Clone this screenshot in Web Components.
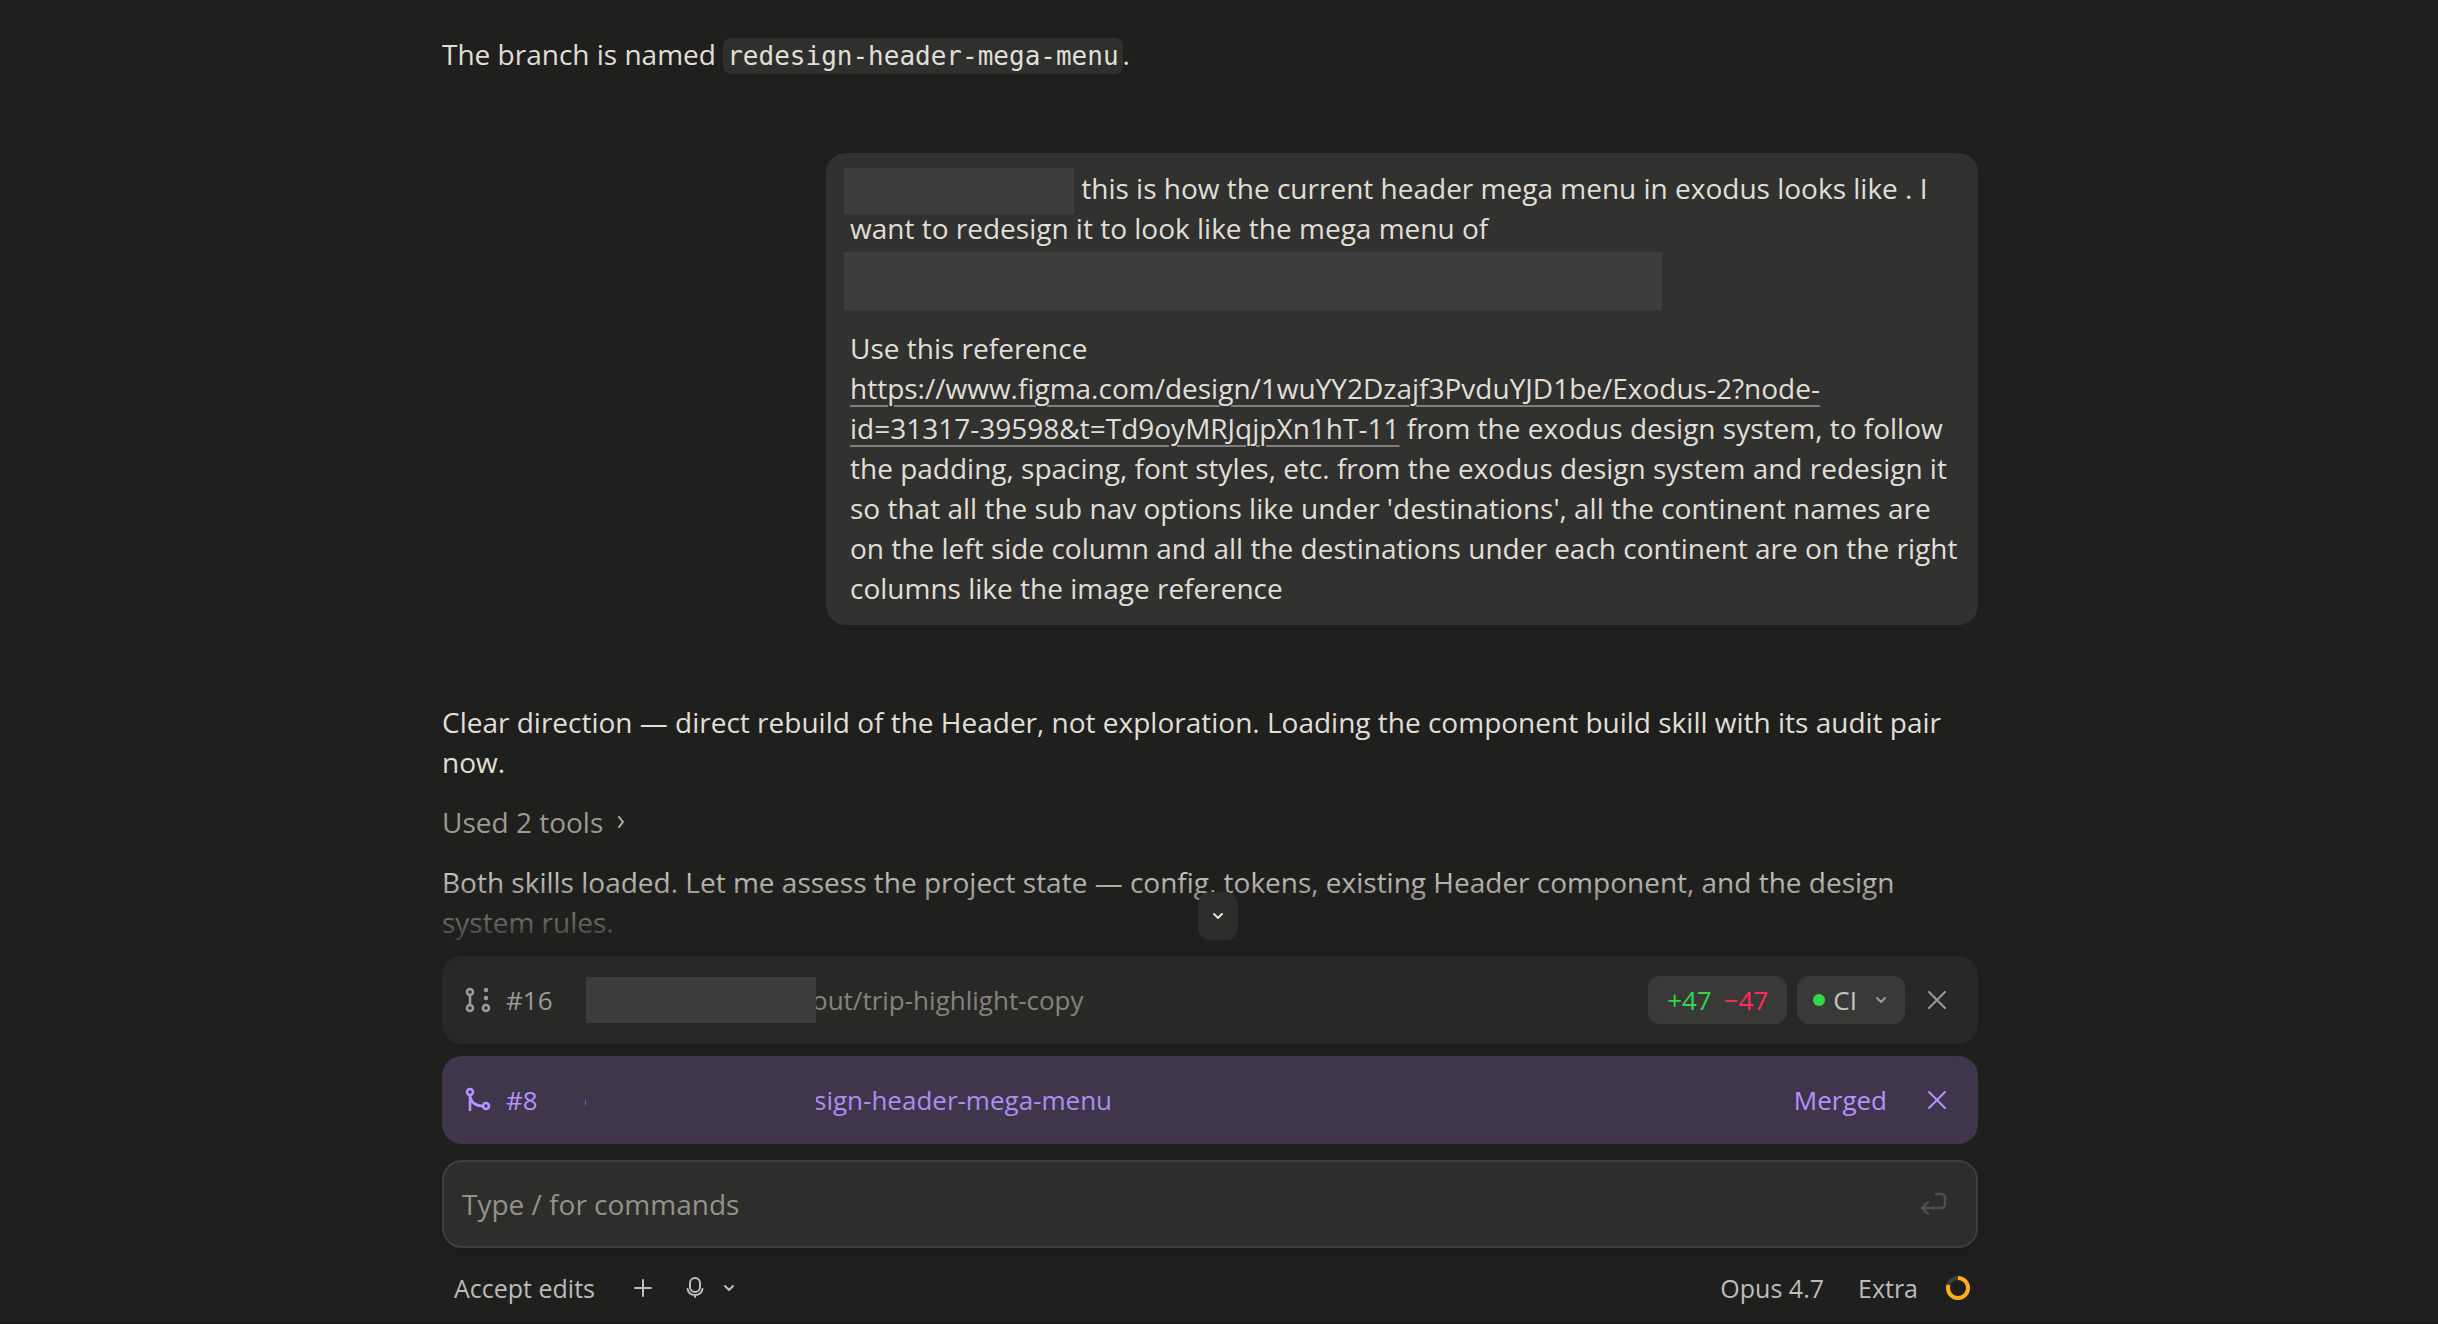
<!DOCTYPE html>
<html lang="en">
<head>
<meta charset="utf-8">
<title>Session</title>
<style>
  :root {
    --bg: #1f1f1e;
    --surface: #31312f;
    --text: #e0dfd7;
    --muted: #9c9a8e;
    --icon: #bcbcba;
    --redact: #3d3d3d;
    --purple: #b592ff;
  }
  body {
    margin: 0;
    background: var(--bg);
    color: var(--text);
    font: 28px/40px "Open Sans", "Noto Sans", sans-serif;
  }
</style>
</head>
<body>
<chat-app>
  <chat-message>The branch is named <code-chip>redesign-header-mega-menu</code-chip>.</chat-message>
  <user-bubble><redacted-block></redacted-block> this is how the current header mega menu in exodus looks like . I want to redesign it to look like the mega menu of <redacted-block wide></redacted-block>Use this reference<br><text-link href="https://www.figma.com/design/1wuYY2Dzajf3PvduYJD1be/Exodus-2?node-id=31317-39598&amp;t=Td9oyMRJqjpXn1hT-11">https://www.figma.com/design/1wuYY2Dzajf3PvduYJD1be/Exodus-2?node-<br>id=31317-39598&amp;t=Td9oyMRJqjpXn1hT-11</text-link> from the exodus design system, to follow the padding, spacing, font styles, etc. from the exodus design system and redesign it so that all the sub nav options like under 'destinations', all the continent names are on the left side column and all the destinations under each continent are on the right columns like the image reference</user-bubble>
  <chat-message>Clear direction — direct rebuild of the Header, not exploration. Loading the component build skill with its audit pair now.</chat-message>
  <tool-summary>Used 2 tools</tool-summary>
  <chat-message>Both skills loaded. Let me assess the project state — config, tokens, existing Header component, and the design system rules.</chat-message>

  <pr-row slot="footer" number="#16" icon="draft">
    <redacted-block slot="name"></redacted-block>
    <span slot="name">out/trip-highlight-copy</span>
    <diff-chip slot="status" added="+47" removed="−47"></diff-chip>
    <ci-chip slot="status"></ci-chip>
  </pr-row>
  <pr-row slot="footer" number="#8" icon="merge" merged>
    <span slot="lead">c</span>
    <redacted-block slot="name"></redacted-block>
    <span slot="name">sign-header-mega-menu</span>
    <span slot="status">Merged</span>
  </pr-row>
  <prompt-box slot="footer"></prompt-box>
  <prompt-toolbar slot="footer"></prompt-toolbar>
</chat-app>

<script>
const BUTTON_RESET = `
  button {
    font: inherit;
    color: inherit;
    background: none;
    border: 0;
    padding: 0;
    margin: 0;
    cursor: pointer;
  }
  svg {
    display: block;
    fill: none;
    stroke: currentColor;
    stroke-width: 2;
    stroke-linecap: round;
    stroke-linejoin: round;
  }
`;

const ICONS = {
  down: `<svg width="12" height="12" viewBox="0 0 12 12"><path d="M2 4l4 4 4-4"/></svg>`,
  right: `<svg width="12" height="12" viewBox="0 0 12 12"><path d="M4 1l4 5-4 5"/></svg>`,
  close: `<svg width="20" height="20" viewBox="0 0 20 20"><path d="M2 2l16 16M18 2L2 18"/></svg>`,
  plus: `<svg width="20" height="20" viewBox="0 0 20 20"><path d="M10 2v16M2 10h16"/></svg>`,
  draft: `<svg class="pr" width="28" height="28" viewBox="0 0 28 28"><circle cx="6" cy="6" r="3"/><circle cx="6" cy="22" r="3"/><circle cx="22" cy="22" r="3"/><path d="M6 9v10"/><circle cx="22" cy="4" r="1" fill="currentColor"/><circle cx="22" cy="12" r="1" fill="currentColor"/></svg>`,
  merge: `<svg class="pr" width="28" height="28" viewBox="0 0 28 28"><circle cx="6" cy="6" r="3"/><circle cx="22" cy="20" r="3"/><path stroke-linecap="butt" d="M6 9v16M6 10c1 6 5 10 13 10"/></svg>`,
  mic: `<svg width="20" height="24" viewBox="0 0 20 24"><rect x="5" y="2" width="10" height="14" rx="5"/><path d="M2.500 13c.8 3.800 3.700 6 7.500 6s6.700-2.200 7.500-6M10 19v2"/></svg>`,
  enter: `<svg width="28" height="24" viewBox="0 0 28 24"><path d="M16 2h5a4 4 0 0 1 4 4v6a4 4 0 0 1-4 4H3M8 10l-6 6 6 6"/></svg>`
};

class ChatApp extends HTMLElement {
  constructor() {
    super();
    this.attachShadow({ mode: "open" });
    this.shadowRoot.innerHTML = `
      <style>
        ${BUTTON_RESET}
        :host {
          display: flex;
          flex-direction: column;
          height: 100vh;
          box-sizing: border-box;
          border-bottom: 1px solid #191718;
        }
        main {
          flex: 1;
          min-height: 0;
          overflow: hidden;
          position: relative;
          display: flex;
          flex-direction: column;
          justify-content: flex-end;
          padding: 0 18px 14px 0;
        }
        .column {
          display: flex;
          flex-direction: column;
          gap: 20px;
          width: 100%;
          max-width: 1536px;
          margin: 0 auto;
        }
        #fade {
          position: absolute;
          left: 0;
          right: 0;
          bottom: 0;
          height: 96px;
          background: linear-gradient(transparent, var(--bg));
          pointer-events: none;
        }
        #jump {
          position: absolute;
          left: 50%;
          bottom: 16px;
          margin-left: -21px;
          width: 40px;
          height: 48px;
          border-radius: 12px;
          background: #2d2d2c;
          display: grid;
          place-items: center;
        }
        footer {
          padding: 0 18px 11px 0;
        }
        footer .column {
          gap: 12px;
        }
      </style>
      <main>
        <div class="column"><slot></slot></div>
        <div id="fade"></div>
        <button id="jump" aria-label="Scroll to bottom">${ICONS.down}</button>
      </main>
      <footer><div class="column"><slot name="footer"></slot></div></footer>
    `;
  }
}
customElements.define("chat-app", ChatApp);

class ChatMessage extends HTMLElement {
  constructor() {
    super();
    this.attachShadow({ mode: "open" });
    this.shadowRoot.innerHTML = `
      <style>
        :host { display: block; }
      </style>
      <slot></slot>
    `;
  }
}
customElements.define("chat-message", ChatMessage);

class CodeChip extends HTMLElement {
  constructor() {
    super();
    this.attachShadow({ mode: "open" });
    // inline element: no whitespace around <code>, it would show up in the sentence
    this.shadowRoot.innerHTML = `<style>
        code {
          font: 26px/36px "DejaVu Sans Mono", monospace;
          padding: 3px 4px;
          border-radius: 8px;
          background: #2f2f2e;
        }
      </style><code><slot></slot></code>`;
  }
}
customElements.define("code-chip", CodeChip);

class UserBubble extends HTMLElement {
  constructor() {
    super();
    this.attachShadow({ mode: "open" });
    this.shadowRoot.innerHTML = `
      <style>
        :host {
          display: block;
          box-sizing: border-box;
          width: 75%;
          align-self: flex-end;
          margin: 59px 0 57px;
          padding: 15px 12px 17px 24px;
          border-radius: 20px;
          background: var(--surface);
        }
      </style>
      <slot></slot>
    `;
  }
}
customElements.define("user-bubble", UserBubble);

// Solid block that hides a private name, drawn slightly larger than its text
class RedactedBlock extends HTMLElement {
  constructor() {
    super();
    this.attachShadow({ mode: "open" });
    this.shadowRoot.innerHTML = `
      <style>
        :host {
          display: inline-block;
          vertical-align: top;
          width: 230px;
          height: 46px;
          margin: 0 0 -6px -6px;
          background: var(--redact);
        }
        :host([wide]) {
          display: block;
          width: 818px;
          max-width: 100%;
          height: 58px;
          margin: 4px 0 18px -6px;
        }
      </style>
    `;
  }
}
customElements.define("redacted-block", RedactedBlock);

class TextLink extends HTMLElement {
  constructor() {
    super();
    this.attachShadow({ mode: "open" });
    this.shadowRoot.innerHTML = `<style>
        a {
          color: inherit;
          text-decoration: underline 2px #7f7e7a;
          text-underline-offset: 6px;
        }
      </style><a><slot></slot></a>`;
    this.shadowRoot.querySelector("a").href = this.getAttribute("href");
  }
}
customElements.define("text-link", TextLink);

class ToolSummary extends HTMLElement {
  constructor() {
    super();
    this.attachShadow({ mode: "open" });
    this.shadowRoot.innerHTML = `
      <style>
        ${BUTTON_RESET}
        :host { display: block; color: var(--muted); }
        button { display: flex; align-items: center; gap: 12px; }
        svg { color: #b5b4ac; }
      </style>
      <button><slot></slot>${ICONS.right}</button>
    `;
  }
}
customElements.define("tool-summary", ToolSummary);

class PrRow extends HTMLElement {
  constructor() {
    super();
    this.attachShadow({ mode: "open" });
    this.shadowRoot.innerHTML = `
      <style>
        ${BUTTON_RESET}
        :host {
          display: flex;
          align-items: center;
          box-sizing: border-box;
          height: 88px;
          padding: 0 31px 0 22px;
          border-radius: 20px;
          background: #282827;
          color: #9b9b99;
          font-size: 26px;
        }
        :host([merged]) {
          --redact: #3f364b;
          background: #3f364b;
          color: var(--purple);
        }
        svg.pr { stroke-width: 2.6; }
        #number {
          color: inherit;
          text-decoration: none;
          width: 78px;
          margin-left: 14px;
        }
        #name {
          flex: 1;
          display: flex;
          align-items: center;
          color: #85837b;
        }
        :host([merged]) #name { color: #ad8cf3; }
        /* the block covers the first part of the branch name */
        ::slotted(redacted-block) {
          position: relative;
          margin: 0 -4px 0 2px;
        }
        :host([merged]) ::slotted(redacted-block) { margin: 0 -2px 0 2px; }
        ::slotted([slot="lead"]) { width: 0; }
        #status {
          display: flex;
          align-items: center;
          gap: 10px;
          margin-right: 22px;
        }
        :host([merged]) #status { margin-right: 40px; }
      </style>
      ${ICONS[this.getAttribute("icon")]}
      <a id="number" href="#"></a>
      <div id="name"><slot name="lead"></slot><slot name="name"></slot></div>
      <div id="status"><slot name="status"></slot></div>
      <button aria-label="Dismiss">${ICONS.close}</button>
    `;
    this.shadowRoot.getElementById("number").textContent = this.getAttribute("number");
  }
}
customElements.define("pr-row", PrRow);

class DiffChip extends HTMLElement {
  constructor() {
    super();
    this.attachShadow({ mode: "open" });
    this.shadowRoot.innerHTML = `
      <style>
        ${BUTTON_RESET}
        button {
          display: flex;
          align-items: center;
          gap: 12px;
          height: 48px;
          padding: 0 19px;
          border-radius: 12px;
          background: #393938;
        }
        #added { color: #32d74b; }
        #removed { color: #ff2d55; }
      </style>
      <button><span id="added"></span><span id="removed"></span></button>
    `;
    this.shadowRoot.getElementById("added").textContent = this.getAttribute("added");
    this.shadowRoot.getElementById("removed").textContent = this.getAttribute("removed");
  }
}
customElements.define("diff-chip", DiffChip);

class CiChip extends HTMLElement {
  constructor() {
    super();
    this.attachShadow({ mode: "open" });
    this.shadowRoot.innerHTML = `
      <style>
        ${BUTTON_RESET}
        button {
          display: flex;
          align-items: center;
          height: 48px;
          padding: 0 18px 0 16px;
          border-radius: 12px;
          background: #393938;
          color: #c4c4c2;
        }
        i {
          width: 12px;
          height: 12px;
          margin-right: 8px;
          border-radius: 50%;
          background: #32d74b;
        }
        svg { margin-left: 18px; color: #9b9b99; }
      </style>
      <button><i></i>CI${ICONS.down}</button>
    `;
  }
}
customElements.define("ci-chip", CiChip);

class PromptBox extends HTMLElement {
  constructor() {
    super();
    this.attachShadow({ mode: "open" });
    this.shadowRoot.innerHTML = `
      <style>
        ${BUTTON_RESET}
        :host {
          display: flex;
          align-items: center;
          box-sizing: border-box;
          height: 88px;
          margin-top: 4px;
          padding: 0 28px 0 18px;
          border: 2px solid #3e3e3c;
          border-radius: 20px;
          background: #2d2d2b;
          box-shadow: 0 4px 24px rgba(0, 0, 0, 0.12);
        }
        input {
          flex: 1;
          min-width: 0;
          font: inherit;
          color: inherit;
          background: none;
          border: 0;
          padding: 0;
          outline: none;
        }
        input::placeholder { color: #949287; opacity: 1; }
        button { color: #4f4f4d; }
        svg { stroke-width: 2.4; }
      </style>
      <input type="text" aria-label="Prompt" placeholder="Type / for commands">
      <button aria-label="Send">${ICONS.enter}</button>
    `;
  }
}
customElements.define("prompt-box", PromptBox);

class PromptToolbar extends HTMLElement {
  constructor() {
    super();
    this.attachShadow({ mode: "open" });
    this.shadowRoot.innerHTML = `
      <style>
        ${BUTTON_RESET}
        :host {
          display: flex;
          align-items: center;
          justify-content: space-between;
          height: 48px;
          margin-top: 4px;
          padding: 0 8px 0 12px;
          color: var(--icon);
          font-size: 25px;
        }
        div { display: flex; align-items: center; }
        #left { gap: 38px; }
        #right { gap: 34px; }
        #voice { gap: 18px; }
        #left > :nth-child(2) { margin-right: -6px; }
        #usage { margin-left: -6px; }
        #usage svg { stroke-width: 4; stroke-linecap: butt; }
      </style>
      <div id="left">
        <button>Accept edits</button>
        <button aria-label="Add">${ICONS.plus}</button>
        <div id="voice">
          <button aria-label="Dictate">${ICONS.mic}</button>
          <button aria-label="Dictation options">${ICONS.down}</button>
        </div>
      </div>
      <div id="right">
        <button>Opus 4.7</button>
        <button>Extra</button>
        <button id="usage" aria-label="Usage">
          <svg width="24" height="24" viewBox="0 0 24 24">
            <circle cx="12" cy="12" r="10" stroke="#3e3e3c"/>
            <circle cx="12" cy="12" r="10" stroke="#ffae17" pathLength="100" stroke-dasharray="80 20" transform="rotate(-90 12 12)"/>
          </svg>
        </button>
      </div>
    `;
  }
}
customElements.define("prompt-toolbar", PromptToolbar);
</script>
</body>
</html>
